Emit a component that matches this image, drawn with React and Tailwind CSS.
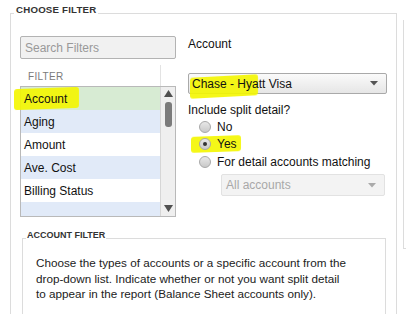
const FILTERS = [
  { label: 'Account', bg: 'bg-[#d7ebd3]', h: 'h-[23px]' },
  { label: 'Aging', bg: 'bg-[#e1eaf8]', h: 'h-[23px]' },
  { label: 'Amount', bg: 'bg-white', h: 'h-[23px]' },
  { label: 'Ave. Cost', bg: 'bg-[#e1eaf8]', h: 'h-[23px]' },
  { label: 'Billing Status', bg: 'bg-white', h: 'h-[23px]' },
  { label: '', bg: 'bg-[#e1eaf8]', h: 'h-[14px]' },
];

function Caret({ color = '#555' }) {
  return (
    <svg width="8" height="5" viewBox="0 0 8 5">
      <path d="M0 0h8L4 4.5z" fill={color} />
    </svg>
  );
}

function Radio({ checked }) {
  return (
    <span className="relative w-[12px] h-[12px] rounded-full border border-[#a8a8a8] bg-gradient-to-b from-[#e8e8e8] to-[#c9c9c9] flex items-center justify-center">
      {checked && <span className="w-[4px] h-[4px] rounded-full bg-[#333]" />}
    </span>
  );
}

function Highlight({ className }) {
  return <span className={'absolute bg-[#f4f700] opacity-90 rounded-[3px] blur-[0.4px] ' + className} />;
}

function FilterList() {
  return (
    <div className="w-[156px]">
      <div className="h-[21px] flex">
        <div className="w-[141px] border-r border-[#e3e3e3] pl-[8px] pt-[6px] text-[10px] leading-[12px] tracking-[0.3px] text-[#7a7a7a]">FILTER</div>
      </div>
      <div className="relative h-[131px] border border-[#b9b9b9] flex">
        <div className="flex-1 border-r border-[#d6d6d6]">
          {FILTERS.map((f, i) => (
            <div key={i} className={'relative pl-[3px] flex items-center text-[12px] text-[#111] ' + f.h + ' ' + f.bg}>
              {i === 0 && <Highlight className="-left-[7px] top-[1px] w-[65px] h-[21px] -skew-y-[2deg]" />}
              <span className="relative">{f.label}</span>
            </div>
          ))}
        </div>
        <div className="w-[14px] bg-[#efefef] flex flex-col items-center">
          <svg className="mt-[3px]" width="9" height="7" viewBox="0 0 9 7"><path d="M0 7L4.5 0 9 7z" fill="#505050" /></svg>
          <div className="mt-[5px] w-[7px] h-[25px] rounded-[3px] bg-[#7b7b7b]" />
          <div className="flex-1" />
          <svg className="mb-[4px]" width="9" height="7" viewBox="0 0 9 7"><path d="M0 0h9L4.5 7z" fill="#505050" /></svg>
        </div>
      </div>
    </div>
  );
}

function AccountOptions() {
  return (
    <div className="flex-1 pl-[12px] text-[12px] text-[#111]">
      <div className="h-[14px] leading-[14px] mt-[1px]">Account</div>
      <div className="relative mt-[22px] w-[199px] h-[21px] border border-[#a9a9a9] rounded-[2px] bg-gradient-to-b from-[#fafafa] to-[#e6e6e6] flex items-center pl-[3px] pr-[8px]">
        <Highlight className="left-[1px] top-[2px] w-[68px] h-[21px] -skew-y-[3deg]" />
        <span className="relative flex-1">Chase - Hyatt Visa</span>
        <Caret />
      </div>
      <div className="mt-[9px] h-[14px] leading-[14px]">Include split detail?</div>
      <div className="mt-[3px] flex flex-col gap-[3px] pl-[11px]">
        <label className="flex items-center gap-[6px] h-[14px]"><Radio /><span>No</span></label>
        <label className="relative flex items-center gap-[6px] h-[14px]">
          <Highlight className="-left-[8px] -top-[1px] w-[50px] h-[16px] -skew-y-[2deg]" />
          <span className="relative flex items-center gap-[6px]"><Radio checked /><span>Yes</span></span>
        </label>
        <label className="flex items-center gap-[6px] h-[14px] mt-[1px]"><Radio /><span>For detail accounts matching</span></label>
      </div>
      <div className="mt-[5px] ml-[33px] w-[164px] h-[22px] border border-[#e2e2e2] rounded-[2px] bg-[#f3f3f3] flex items-center pl-[4px] pr-[8px] text-[#a8a8a8]">
        <span className="flex-1">All accounts</span>
        <Caret color="#aaa" />
      </div>
    </div>
  );
}

export default function App() {
  return (
    <div className="w-[406px] h-[314px] bg-white overflow-hidden flex font-['Liberation_Sans',Arial,sans-serif]">
      <fieldset className="ml-[10px] mt-[4px] w-[387px] h-[340px] border border-[#dcdcdc] px-[9px] shrink-0">
        <legend className="-ml-[6px] px-[2px] pb-[6px] text-[9.7px] leading-[12px] font-bold text-[#333] tracking-[0.2px]">CHOOSE FILTER</legend>
        <div className="mt-[14px] flex">
          <div>
            <div className="w-[156px] h-[23px] border border-[#b3b3b3] rounded-[2px] bg-[#f1f1f1] flex items-center pl-[4px] text-[12px] text-[#999]">Search Filters</div>
            <div className="mt-[6px]"><FilterList /></div>
          </div>
          <AccountOptions />
        </div>
        <fieldset className="mt-[13px] ml-[2px] w-[364px] h-[120px] border border-[#dcdcdc] px-[13px]">
          <legend className="-ml-[10px] px-[1px] pb-[5px] text-[9px] leading-[11px] font-bold text-[#333]">ACCOUNT FILTER</legend>
          <p className="mt-[9px] whitespace-nowrap text-[11.7px] leading-[15.5px] text-[#222]">
            Choose the types of accounts or a specific account from the<br />
            drop-down list. Indicate whether or not you want split detail<br />
            to appear in the report (Balance Sheet accounts only).
          </p>
        </fieldset>
      </fieldset>
      <div className="ml-[6px] mt-[20px] w-[10px] h-[229px] border-l border-b border-[#dcdcdc] shrink-0" />
    </div>
  );
}
